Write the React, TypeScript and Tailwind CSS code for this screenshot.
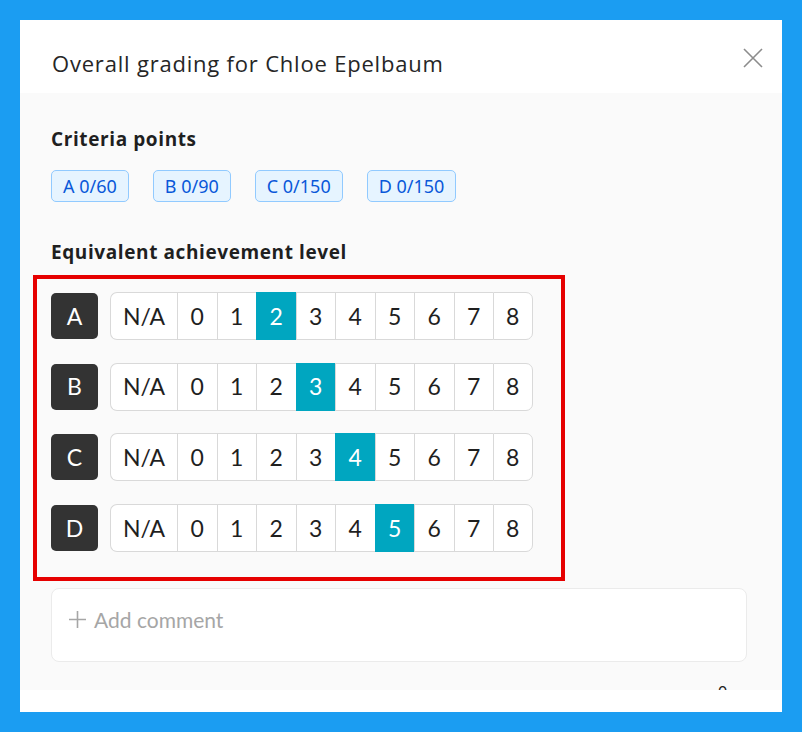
import React from "react";

const levels = ["N/A", "0", "1", "2", "3", "4", "5", "6", "7", "8"];
const rows: { letter: string; selected: string }[] = [
  { letter: "A", selected: "2" },
  { letter: "B", selected: "3" },
  { letter: "C", selected: "4" },
  { letter: "D", selected: "5" },
];
const chips = ["A 0/60", "B 0/90", "C 0/150", "D 0/150"];

function Segment({ selected }: { selected: string }) {
  return (
    <div className="flex h-[48px]">
      {levels.map((lv, i) => {
        const isSel = lv === selected;
        const first = i === 0;
        const last = i === levels.length - 1;
        return (
          <div
            key={lv}
            className={[
              "flex items-center justify-center border-y border-l text-[23px]",
              first ? "w-[67px] rounded-l-[7px]" : "w-[39.5px]",
              last ? "border-r rounded-r-[7px]" : "",
              isSel
                ? "bg-[#00a6c0] border-[#00a6c0] text-white"
                : "bg-white border-[#d9d9d9] text-[#1f1f1f]",
            ].join(" ")}
          >
            {lv}
          </div>
        );
      })}
    </div>
  );
}

const heading = { fontFamily: "'Open Sans', Lato, sans-serif" };

export default function App() {
  return (
    <div
      className="min-h-screen bg-[#1b9df2] p-5"
      style={{ fontFamily: "Lato, 'Noto Sans', sans-serif" }}
    >
      <div className="flex h-[692px] w-[762px] flex-col bg-white">
        <div className="flex h-[73px] shrink-0 items-start justify-between pl-[32px] pr-[19px] pt-[28px]">
          <div className="text-[22px] leading-[30px] tracking-[0.8px] text-[#262626]" style={heading}>
            Overall grading for Chloe Epelbaum
          </div>
          <svg width="20" height="20" viewBox="0 0 20 20">
            <path d="M1 1 L19 19 M19 1 L1 19" stroke="#8c8c8c" strokeWidth="1.6" fill="none" />
          </svg>
        </div>
        <div className="h-[597px] shrink-0 overflow-hidden bg-[#fafafa] pl-[31px] pr-[35px] pt-[32px]">
          <div className="text-[19px] font-bold leading-[28px] tracking-[0.6px] text-[#1f1f1f]" style={heading}>
            Criteria points
          </div>
          <div className="mt-[17px] flex gap-6">
            {chips.map((c) => (
              <div
                key={c}
                className="flex h-[32px] items-center rounded-[5px] border border-[#91caff] bg-[#e6f4ff] px-[11px] text-[18px] text-[#0958d9]"
                style={{ fontFamily: "'Noto Sans', sans-serif" }}
              >
                {c}
              </div>
            ))}
          </div>
          <div className="mt-[36px] text-[19px] font-bold leading-[28px] tracking-[0.6px] text-[#1f1f1f]" style={heading}>
            Equivalent achievement level
          </div>
          <div className="relative mt-[26px] flex flex-col gap-[22.67px]">
            {rows.map((r) => (
              <div key={r.letter} className="flex items-center gap-3">
                <div className="flex h-[46px] w-[47px] items-center justify-center rounded-[5px] bg-[#333333] text-[23px] text-white">
                  {r.letter}
                </div>
                <Segment selected={r.selected} />
              </div>
            ))}
            <div className="pointer-events-none absolute left-[-18px] top-[-17px] h-[306px] w-[532px] border-4 border-[#e60000]" />
          </div>
          <div className="mt-[36px] h-[74px] rounded-[8px] border border-[#ebebeb] bg-white pl-[16px] pt-[17px]">
            <div className="flex items-center gap-[7px] text-[21px] leading-[28px] text-[#a6a6a6]">
              <svg width="19" height="19" viewBox="0 0 19 19">
                <path d="M9.5 1 V18 M1 9.5 H18" stroke="#a6a6a6" strokeWidth="1.6" fill="none" />
              </svg>
              <span>Add comment</span>
            </div>
          </div>
          <div className="mt-[19px] pr-[20px] text-right text-[15px] leading-[20px] text-[#1f1f1f]">0</div>
        </div>
        <div className="flex-1 bg-white" />
      </div>
    </div>
  );
}
